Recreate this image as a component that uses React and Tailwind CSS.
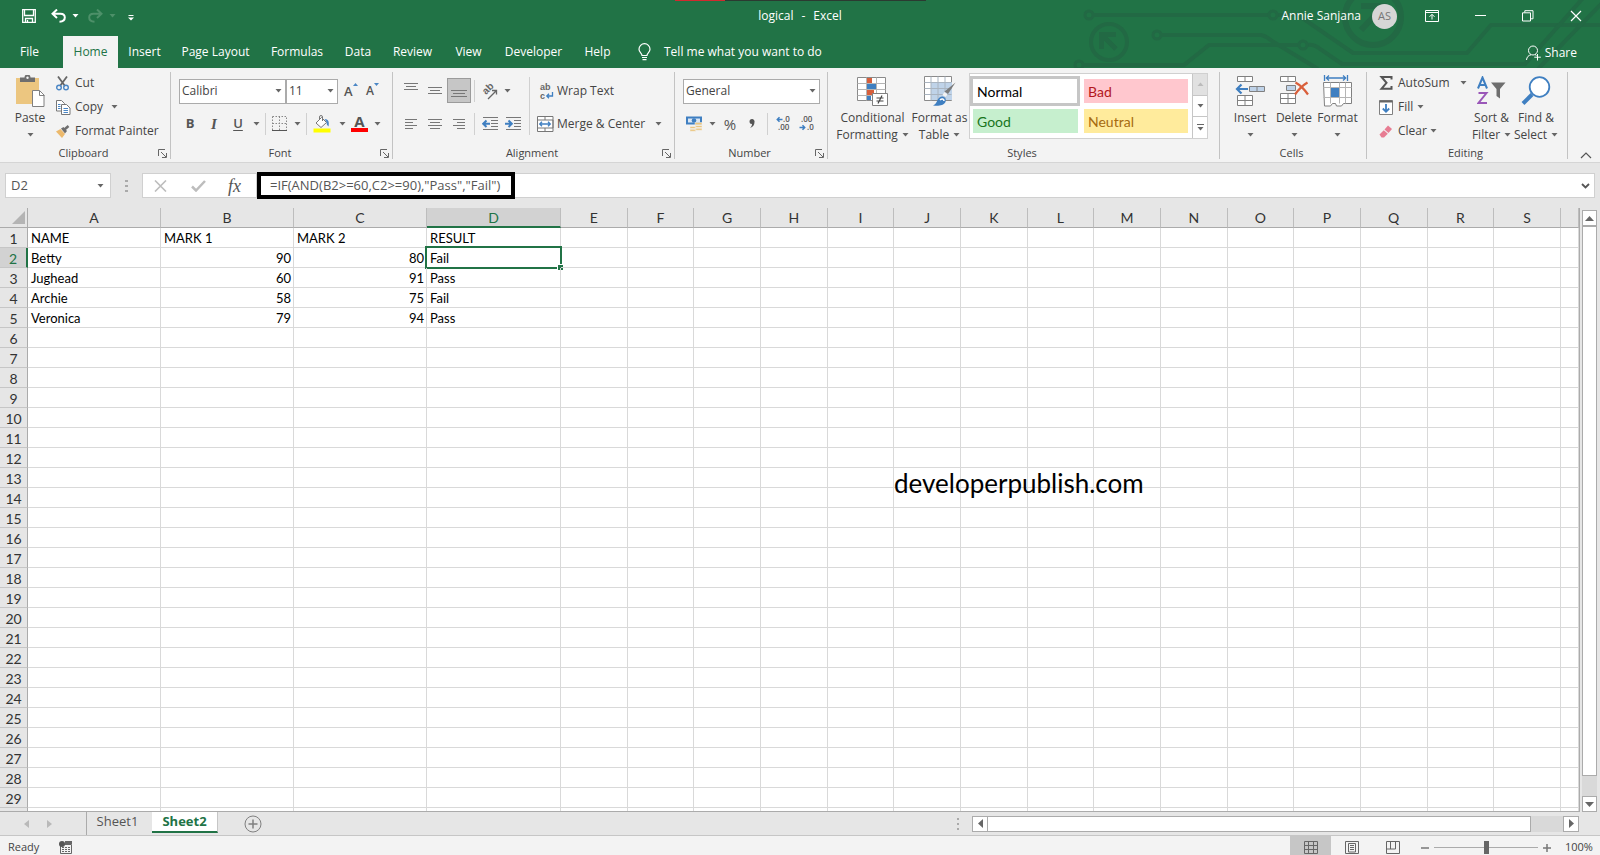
import { useState } from 'react'

const COLUMNS = ['A', 'B', 'C', 'D', 'E', 'F', 'G', 'H', 'I', 'J', 'K', 'L', 'M', 'N', 'O', 'P', 'Q', 'R', 'S', ''];

const SHEET = [
  ['NAME', 'MARK 1', 'MARK 2', 'RESULT'],
  ['Betty', 90, 80, 'Fail'],
  ['Jughead', 60, 91, 'Pass'],
  ['Archie', 58, 75, 'Fail'],
  ['Veronica', 79, 94, 'Pass'],
];

const TABS = [
  { name: 'File', width: 'w-[63px] pr-1' },
  { name: 'Home', width: 'w-[55px]' },
  { name: 'Insert', width: 'w-[53px]' },
  { name: 'Page Layout', width: 'w-[89px]' },
  { name: 'Formulas', width: 'w-[74px]' },
  { name: 'Data', width: 'w-[48px]' },
  { name: 'Review', width: 'w-[61px]' },
  { name: 'View', width: 'w-[51px]' },
  { name: 'Developer', width: 'w-[79px]' },
  { name: 'Help', width: 'w-[49px]' },
];

function Caret({ className = 'text-[#666]' }) {
  return (
    <svg className={`shrink-0 ${className}`} width="7" height="4" viewBox="0 0 7 4" fill="currentColor">
      <path d="M0.5 0h6L3.5 3.5z" />
    </svg>
  );
}

function ScrollArrow({ className = '' }) {
  return (
    <svg className={`shrink-0 ${className}`} width="9" height="5" viewBox="0 0 9 5" fill="#666">
      <path d="M0 0h9L4.500 5z" />
    </svg>
  );
}

function CaretButton({ label }) {
  return (
    <button aria-label={label} className="flex h-6 w-3.5 items-center justify-center">
      <Caret />
    </button>
  );
}

function Divider() {
  return <span className="h-[22px] w-px shrink-0 bg-[#d0d0d0]" />;
}

// rows of horizontal strokes, used by every alignment button
function Lines({ rows }) {
  return (
    <svg width="16" height="16" viewBox="0 0 16 16" stroke="#777" strokeWidth="1">
      {rows.map(([x, w, y]) => (
        <path key={y} d={`M${x} ${y}.5h${w}`} />
      ))}
    </svg>
  );
}

function Group({ name, width, launcher, children }) {
  return (
    <section aria-label={name} className={`relative flex shrink-0 flex-col ${width}`}>
      <div className="flex h-[78px]">{children}</div>
      <div className="flex h-[18px] items-center justify-center text-[11px] leading-4 text-[#444]">
        <span className="flex-1" />
        <span>{name}</span>
        <span className="flex flex-1 justify-end pr-1">
          {launcher && (
            <button aria-label={`${name} settings`}>
              <svg width="9" height="9" viewBox="0 0 9 9" fill="none" stroke="#666">
                <path d="M0.5 7V0.5H7M3 3l5 5M8.500 4v4.500H4" />
              </svg>
            </button>
          )}
        </span>
      </div>
      <span className="absolute right-0 top-1 h-[87px] w-px bg-[#c3c3c3]" />
    </section>
  );
}

function BigButton({ icon, lines, width }) {
  return (
    <button className={`flex flex-col items-center pt-[7px] text-[12px] leading-[17px] text-[#444] ${width}`}>
      <span className="mb-0.5 flex h-8 items-center justify-center">{icon}</span>
      <span className="whitespace-nowrap">{lines[0]}</span>
      <span className="flex h-[17px] items-center gap-1 whitespace-nowrap">
        {lines[1]}
        <Caret />
      </span>
    </button>
  );
}

function SmallButton({ icon, children }) {
  return (
    <button className="flex h-6 items-center whitespace-nowrap text-[12px] text-[#444]">
      <span className="flex w-[19px] items-center">{icon}</span>
      {children}
    </button>
  );
}

function Dropdown({ label, width, options }) {
  return (
    <div className={`relative ${width}`}>
      <select
        aria-label={label}
        className="h-[25px] w-full appearance-none border border-[#ababab] bg-white px-0.5 text-[12px] leading-4 text-[#444] outline-none"
      >
        {options.map((o) => (
          <option key={o}>{o}</option>
        ))}
      </select>
      <span className="pointer-events-none absolute inset-y-0 right-1 flex items-center">
        <Caret />
      </span>
    </div>
  );
}

function Circuit() {
  return (
    <svg className="absolute right-0 top-0" width="530" height="68" viewBox="1070 0 530 68" fill="none" stroke="#226944" strokeWidth="4">
      <circle cx="1089" cy="15" r="4" strokeWidth="3" />
      <path d="M1094 15H1268M1278 15H1298L1353 53H1467L1491 25H1600" />
      <circle cx="1273" cy="15" r="4" strokeWidth="3" />
      <circle cx="1109" cy="42" r="18" strokeWidth="4" />
      <path d="M1116 49L1103 36M1101.500 49V34.500H1116" strokeWidth="5" />
      <circle cx="1157" cy="35" r="4" strokeWidth="3" />
      <path d="M1162 35H1261Q1266 36 1272 41L1318 69" />
      <circle cx="1079" cy="65" r="4" strokeWidth="3" />
      <path d="M1084 65H1184L1209 45H1298M1308 45Q1314 44 1320 49L1342 64H1525L1583 -2M1538 69L1602 3" />
      <circle cx="1303" cy="45" r="4" strokeWidth="3" />
      <circle cx="1373" cy="17" r="28" strokeWidth="6" />
      <path d="M1361 6H1384V22M1361 30L1382 8" strokeWidth="6" />
    </svg>
  );
}

function TitleBar() {
  return (
    <header className="relative bg-[#217346] text-[12px] text-white">
      <Circuit />
      <div className="absolute inset-x-0 top-0 flex h-px justify-center">
        <span className="w-[50px] bg-[#d12a2f]" />
        <span className="w-[201px] bg-[#2b3a31]" />
      </div>
      <div className="relative flex h-9 items-center px-[18px] pb-1">
        <div className="flex flex-1 items-center">
          <button aria-label="Save" className="ml-1">
            <svg width="14" height="14" viewBox="0 0 14 14" fill="none" stroke="#fff" strokeWidth="1.300">
              <path d="M0.700 0.700H13.300V13.300H0.700z" />
              <path d="M2.500 1v5.500h9V1" />
              <path d="M3.500 13V9.500h7V13M5.500 13v-2" />
            </svg>
          </button>
          <button aria-label="Undo" className="ml-[15px]">
            <svg width="15" height="14" viewBox="0 0 15 14" fill="none" stroke="#fff" strokeWidth="2">
              <path d="M6 0.500L1.500 4.800L6 9M2 4.800H9.500C12.500 4.800 13.800 6.500 13.800 8.500C13.800 11 12 12.500 8.500 12.700" />
            </svg>
          </button>
          <span className="ml-1.5"><Caret className="text-white" /></span>
          <button aria-label="Redo" className="ml-[9px]">
            <svg width="15" height="14" viewBox="0 0 15 14" fill="none" stroke="#4d9069" strokeWidth="2">
              <path d="M9 0.500L13.500 4.800L9 9M13 4.800H5.500C2.500 4.800 1.200 6.500 1.200 8.500C1.200 11 3 12.500 6.500 12.700" />
            </svg>
          </button>
          <span className="ml-1.5"><Caret className="text-[#4d9069]" /></span>
          <button aria-label="Customize" className="ml-3 pt-1">
            <svg width="6" height="6" viewBox="0 0 6 6" fill="#fff"><path d="M0.500 0h5v1h-5zM0 2.500h6L3 5.500z" /></svg>
          </button>
        </div>
        <h1 className="flex gap-2"><span>logical</span><span>-</span><span>Excel</span></h1>
        <div className="flex flex-1 items-center justify-end">
          <span>Annie Sanjana</span>
          <span className="ml-[11px] flex size-[25px] items-center justify-center rounded-full bg-[#d6d6d6] text-[11px] text-[#777]">AS</span>
          <button aria-label="Ribbon display options" className="ml-[28px]">
            <svg width="14" height="12" viewBox="0 0 14 12" fill="none" stroke="#fff">
              <path d="M0.500 0.500H13.500V11.500H0.500zM0.500 2.500H13.500M7 9.500V4.500M4.500 6.800L7 4.300L9.500 6.800" />
            </svg>
          </button>
          <button aria-label="Minimize" className="ml-9">
            <svg width="11" height="2" viewBox="0 0 11 2" fill="#fff"><path d="M0 0h11v1H0z" /></svg>
          </button>
          <button aria-label="Restore" className="ml-9">
            <svg width="12" height="12" viewBox="0 0 12 12" fill="none" stroke="#fff">
              <path d="M0.500 2.800H8.500V11H0.500zM2.800 2.500V0.700H11V8.800H8.800" />
            </svg>
          </button>
          <button aria-label="Close" className="ml-9">
            <svg width="12" height="12" viewBox="0 0 12 12" stroke="#fff" strokeWidth="1.200"><path d="M1 1l10 10M11 1L1 11" /></svg>
          </button>
        </div>
      </div>
      <nav className="relative flex h-8">
        {TABS.map((tab) => (
          <button
            key={tab.name}
            className={`shrink-0 whitespace-nowrap text-center ${tab.width} ${tab.name === 'Home' ? 'bg-[#f3f3f3] text-[#217346]' : ''}`}
          >
            {tab.name}
          </button>
        ))}
        <button className="ml-4 flex items-center gap-[13px] whitespace-nowrap">
          <svg width="13" height="18" viewBox="0 0 13 18" fill="none" stroke="#fff" strokeWidth="1.200">
            <path d="M4 12.500C4 10 1 9.500 1 6.200A5.500 5.500 0 0 1 12 6.200C12 9.500 9 10 9 12.500zM4 14.500h5M4.500 16.700h4" />
          </svg>
          Tell me what you want to do
        </button>
        <button className="ml-auto mr-[23px] flex items-center gap-1 pt-0.5">
          <svg width="15" height="16" viewBox="0 0 15 16" fill="none" stroke="#fff">
            <circle cx="7" cy="5.500" r="4.500" />
            <path d="M0.500 15C0.800 12 2.500 10.200 5 9.800M11.500 9v6.500M8.300 12.200h6.500M9 9.500l1.500 1" />
          </svg>
          Share
        </button>
      </nav>
    </header>
  );
}

function ClipboardGroup() {
  return (
    <Group name="Clipboard" width="w-[171px]" launcher>
      <BigButton
        width="w-14 pl-1"
        lines={['Paste', '']}
        icon={
          <svg width="30" height="32" viewBox="0 0 30 32">
            <path d="M1 3h23v26H1z" fill="#ecc680" />
            <path d="M5 2.500h4.500a3 3 0 0 1 6 0H20V7H5z" fill="#6e6e6e" />
            <circle cx="12.500" cy="2.800" r="1.200" fill="#f3f3f3" />
            <path d="M17.500 15.500h7l4.500 4.500v11.500H17.500z" fill="#fff" stroke="#808080" />
            <path d="M24.500 15.500v5h5" fill="none" stroke="#808080" />
          </svg>
        }
      />
      <div className="flex flex-col items-start pt-[3px]">
        <SmallButton
          icon={
            <svg width="13" height="15" viewBox="0 0 13 15" fill="none">
              <path d="M2 0.500L9 10M11 0.500L4 10" stroke="#666" strokeWidth="1.800" />
              <circle cx="3" cy="11.500" r="2.300" stroke="#4a86c5" strokeWidth="1.400" />
              <circle cx="10" cy="11.500" r="2.300" stroke="#4a86c5" strokeWidth="1.400" />
            </svg>
          }
        >
          Cut
        </SmallButton>
        <div className="flex items-center gap-1">
          <SmallButton
            icon={
              <svg width="15" height="15" viewBox="0 0 15 15" stroke="#777">
                <path d="M0.500 0.500h5l3 3v7.500h-8z" fill="#fff" />
                <path d="M5.500 4.500h5l3.500 3.500v6.500h-8.500z" fill="#fff" />
                <path d="M2 4.500h2.500M2 6.500h2.500M2 8.500h2.500M7.500 8.500h4.500M7.500 10.500h4.500M7.500 12.500h4.500" stroke="#4a86c5" />
              </svg>
            }
          >
            Copy
          </SmallButton>
          <CaretButton label="Copy options" />
        </div>
        <SmallButton
          icon={
            <svg width="14" height="13" viewBox="0 0 14 13">
              <path d="M0 6.500L4.500 4L9 9L6 13z" fill="#ecb96c" />
              <path d="M5 3.500L7.500 2L11 6L9 8.500z" fill="#6e6e6e" />
              <path d="M8.500 4.500L12.500 1" stroke="#6e6e6e" strokeWidth="2.500" />
            </svg>
          }
        >
          Format Painter
        </SmallButton>
      </div>
    </Group>
  );
}

function FontGroup() {
  return (
    <Group name="Font" width="w-[222px]" launcher>
      <div className="flex flex-col gap-1.5 pl-2 pt-[9px] text-[#555]">
        <div className="flex h-[27px] items-center">
          <Dropdown label="Font" width="w-[107px]" options={['Calibri', 'Arial', 'Cambria']} />
          <Dropdown label="Font size" width="w-[52px]" options={['11', '12', '14']} />
          <button aria-label="Increase font size" className="ml-1.5 flex w-[18px] text-[13px] font-semibold leading-4">
            A
            <svg width="5" height="4" viewBox="0 0 5 4" fill="#4a86c5"><path d="M0 3h5L2.500 0z" /></svg>
          </button>
          <button aria-label="Decrease font size" className="ml-1 flex w-[18px] text-[12px] font-semibold leading-4">
            A
            <svg width="5" height="4" viewBox="0 0 5 4" fill="#4a86c5"><path d="M0 0h5L2.500 3z" /></svg>
          </button>
        </div>
        <div className="flex h-[27px] items-center text-[13px]">
          <button className="w-[22px] font-bold">B</button>
          <button className="w-[26px] font-['Liberation_Serif',serif] text-[15px] font-bold italic leading-5">I</button>
          <button className="w-[22px] font-semibold underline underline-offset-2">U</button>
          <CaretButton label="Underline options" />
          <span className="mx-0.5 flex"><Divider /></span>
          <button aria-label="Borders" className="flex w-[22px] justify-center">
            <svg width="15" height="15" viewBox="0 0 15 15" fill="none" stroke="#888">
              <path d="M0.500 0.500h14v14M0.500 0.500v14M7.500 0.500v14M0.500 7.500h14" strokeDasharray="1.500 1.500" />
              <path d="M0 14.500h15" stroke="#555" />
            </svg>
          </button>
          <CaretButton label="Border options" />
          <span className="mx-0.5 flex"><Divider /></span>
          <button aria-label="Fill color" className="flex w-[26px] justify-center">
            <svg width="18" height="18" viewBox="0 0 18 18" fill="none">
              <path d="M3 8L8.500 2.500L13.500 7.500L8 12.500z" fill="#fff" stroke="#777" />
              <path d="M6.500 5V2a1.500 1.500 0 0 1 3 0v4" stroke="#777" />
              <path d="M11.500 4C15.500 4 16.500 7 15.500 11.500C13.500 10 13.500 8 13.800 7.500z" fill="#4a86c5" />
              <path d="M0.500 13.500h17v4h-17z" fill="#ff0" />
            </svg>
          </button>
          <CaretButton label="Fill color options" />
          <button aria-label="Font color" className="flex w-[21px] flex-col items-center">
            <span className="text-[15px] font-bold leading-[13px]">A</span>
            <span className="h-1 w-[17px] bg-[#f00]" />
          </button>
          <CaretButton label="Font color options" />
        </div>
      </div>
    </Group>
  );
}

function AlignmentGroup() {
  return (
    <Group name="Alignment" width="w-[282px]" launcher>
      <div className="flex w-[136px] flex-col gap-1.5 pl-1.5 pt-[9px]">
        <div className="flex h-[27px] items-center">
          <button aria-label="Top align" className="flex w-6 justify-center"><Lines rows={[[1, 14, 0], [3, 10, 3], [1, 14, 6]]} /></button>
          <button aria-label="Middle align" className="flex w-6 justify-center"><Lines rows={[[1, 14, 4], [3, 10, 7], [1, 14, 10]]} /></button>
          <button aria-label="Bottom align" className="flex h-[25px] w-6 items-center justify-center border border-[#9b9b9b] bg-[#c6c6c6]">
            <Lines rows={[[0, 16, 7], [2, 12, 10], [0, 16, 13]]} />
          </button>
          <span className="mx-[3px] flex"><Divider /></span>
          <button aria-label="Orientation" className="flex w-[22px] justify-center">
            <svg className="overflow-visible font-['Liberation_Sans',sans-serif]" width="17" height="16" viewBox="0 0 17 16">
              <text x="0" y="0" transform="translate(5 12) rotate(-45)" fontSize="10" fontWeight="600" fill="#666">ab</text>
              <path d="M7 16L15 8M11 7.500h4.500v4" fill="none" stroke="#666" strokeWidth="1.300" />
            </svg>
          </button>
          <CaretButton label="Orientation options" />
        </div>
        <div className="flex h-[27px] items-center">
          <button aria-label="Align left" className="flex w-6 justify-center"><Lines rows={[[2, 12, 3], [2, 8, 6], [2, 12, 9], [2, 8, 12]]} /></button>
          <button aria-label="Center" className="flex w-6 justify-center"><Lines rows={[[1, 14, 3], [3, 10, 6], [1, 14, 9], [3, 10, 12]]} /></button>
          <button aria-label="Align right" className="flex w-6 justify-center"><Lines rows={[[2, 12, 3], [6, 8, 6], [2, 12, 9], [6, 8, 12]]} /></button>
          <span className="mx-[3px] flex"><Divider /></span>
          <button aria-label="Decrease indent" className="flex w-[23px] justify-center">
            <svg width="16" height="14" viewBox="0 0 16 14" fill="none" stroke="#777">
              <path d="M1 0.500h15M9 3.500h7M9 6.500h7M9 9.500h7M1 12.500h15" />
              <path d="M8 6.800H1.500M4.500 3.500L1.200 6.800L4.500 10" stroke="#3f7fc1" strokeWidth="2" />
            </svg>
          </button>
          <button aria-label="Increase indent" className="flex w-[23px] justify-center">
            <svg width="16" height="14" viewBox="0 0 16 14" fill="none" stroke="#777">
              <path d="M1 0.500h15M9 3.500h7M9 6.500h7M9 9.500h7M1 12.500h15" />
              <path d="M0 6.800H6.500M3.500 3.500L6.800 6.800L3.500 10" stroke="#3f7fc1" strokeWidth="2" />
            </svg>
          </button>
        </div>
      </div>
      <span className="mt-[9px] h-[58px] w-px bg-[#d0d0d0]" />
      <div className="flex flex-col gap-1.5 pl-[7px] pt-[9px] text-[12px] text-[#444]">
        <button className="flex h-[27px] items-center">
          <svg className="ml-0.5 mr-[3px] overflow-visible font-['Liberation_Sans',sans-serif]" width="15" height="18" viewBox="0 0 15 18">
            <text x="1" y="8" fontSize="9" fontWeight="600" fill="#666">ab</text>
            <text x="1" y="17" fontSize="9" fontWeight="600" fill="#666">c</text>
            <path d="M13.500 10v4H8M10 11.800L7.800 14L10 16.200" fill="none" stroke="#3f7fc1" strokeWidth="1.300" />
          </svg>
          Wrap Text
        </button>
        <div className="flex h-[27px] items-center">
          <button className="flex items-center whitespace-nowrap">
            <svg className="mr-[3px]" width="17" height="16" viewBox="0 0 17 16" fill="#fff" stroke="#777">
              <path d="M0.500 0.500h15.500v15h-15.500zM8 0.500v3.500M8 12v3.500M0.500 4h15.500v8h-15.500z" />
              <path d="M2.500 8h11M5 5.800L2.700 8L5 10.200M11 5.800L13.300 8L11 10.200" fill="none" stroke="#3f7fc1" strokeWidth="1.300" />
            </svg>
            Merge &amp; Center
          </button>
          <span className="ml-1.5 flex"><CaretButton label="Merge options" /></span>
        </div>
      </div>
    </Group>
  );
}

function NumberGroup() {
  return (
    <Group name="Number" width="w-[153px]" launcher>
      <div className="flex flex-col gap-1.5 pl-2 pt-[9px] text-[#555]">
        <div className="flex h-[27px] items-center">
          <Dropdown label="Number format" width="w-[137px]" options={['General', 'Number', 'Currency']} />
        </div>
        <div className="flex h-[27px] items-center">
          <button aria-label="Accounting format" className="flex w-[22px] justify-center">
            <svg width="17" height="16" viewBox="0 0 17 16">
              <path d="M0 0.500h16v8H0z" fill="#3f7fc1" />
              <path d="M2 2.500h12v4H2z" fill="#dbe7f4" />
              <circle cx="8" cy="4.500" r="2.300" fill="#3f7fc1" />
              <path d="M9 6.500h7v2.300H9zM9 9.500h7v2H9zM9 12.300h7v2H9zM4 10.500h6v2H4zM4 13.300h6v2H4z" fill="#ecc680" stroke="#f3f3f3" strokeWidth="0.500" />
            </svg>
          </button>
          <CaretButton label="Accounting options" />
          <button aria-label="Percent style" className="w-[22px] text-[15px] leading-5">%</button>
          <button aria-label="Comma style" className="flex w-[22px] justify-center">
            <svg width="6" height="9" viewBox="0 0 6 9" fill="#555"><path d="M3 0a2.500 2.500 0 0 1 2.500 3C5.500 6 4 8 1 9C2.500 7.500 3 6.500 3 5A2.500 2.500 0 0 1 3 0z" /></svg>
          </button>
          <span className="mx-1 flex"><Divider /></span>
          <button aria-label="Increase decimal" className="flex w-[23px] justify-center">
            <svg className="overflow-visible" width="15" height="15" viewBox="0 0 15 15" fontSize="8" fontWeight="600" fill="#555">
              <text x="7" y="6">.0</text>
              <text x="2" y="14">.00</text>
              <path d="M6.500 3.500H1.500M3.500 1.300L1.300 3.500L3.500 5.700" fill="none" stroke="#3f7fc1" strokeWidth="1.500" />
            </svg>
          </button>
          <button aria-label="Decrease decimal" className="flex w-[23px] justify-center">
            <svg className="overflow-visible" width="15" height="15" viewBox="0 0 15 15" fontSize="8" fontWeight="600" fill="#555">
              <text x="2" y="6">.00</text>
              <text x="8" y="14">.0</text>
              <path d="M0.500 11.500H5.500M3.500 9.300L5.700 11.500L3.500 13.700" fill="none" stroke="#3f7fc1" strokeWidth="1.500" />
            </svg>
          </button>
        </div>
      </div>
    </Group>
  );
}

function StylesGroup() {
  return (
    <Group name="Styles" width="w-[392px]">
      <div className="flex pl-[7px]">
        <BigButton
          width="w-[75px]"
          lines={['Conditional', 'Formatting']}
          icon={
            <svg width="32" height="30" viewBox="0 0 32 30">
              <path d="M0.500 1.500h28v23h-28z" fill="#fff" stroke="#8a8a8a" />
              <path d="M9.500 1.500v23M19.500 1.500v23M0.500 7.500h28M0.500 13.500h28M0.500 19.500h28" stroke="#b5b5b5" />
              <path d="M10 2h5v5h-5zM10 14h7v5h-7z" fill="#d65f3c" />
              <path d="M10 8h9v5h-9zM10 20h4v4h-4z" fill="#3f7fc1" />
              <path d="M15.500 17.500h15v12h-15z" fill="#fff" stroke="#808080" />
              <path d="M19.500 22h7M19.500 25h7M25 19.500l-4 8" stroke="#444" strokeWidth="1.200" />
            </svg>
          }
        />
        <BigButton
          width="w-[59px]"
          lines={['Format as', 'Table']}
          icon={
            <svg width="32" height="30" viewBox="0 0 32 30">
              <path d="M0.500 0.500h27v24h-27z" fill="#fff" stroke="#8a8a8a" />
              <path d="M7 6h21v18H7z" fill="#bfd3e9" />
              <path d="M7 0.500v24M14 0.500v24M21 0.500v24M0.500 6.500h27M0.500 12.500h27M0.500 18.500h27" stroke="#a9b4c0" />
              <path d="M31.500 6.500L24 18L20.500 15.500z" fill="#7b7b7b" />
              <path d="M20.500 16L23.500 18.500L21.500 21L18.500 19z" fill="#f3f3f3" />
              <path d="M9 29.500C13 28 12.500 24 15.500 21.500C19 19 23 22 21.500 26C19.500 30 14 30 9 29.500z" fill="#3f7fc1" />
              <path d="M16 24c2-2 4-1 4 1" fill="none" stroke="#fff" strokeWidth="1.500" />
            </svg>
          }
        />
      </div>
      <div className="mt-[5px] flex h-[66px] w-[239px] border border-[#d0d0d0] bg-white font-['Lato',sans-serif] text-[14px]">
        <div className="grid flex-1 grid-cols-[110px_1fr] content-start items-start gap-x-1 gap-y-0.5 pr-1 pt-0.5">
          <button className="h-[30px] border-[3px] border-[#c6c6c6] pl-1 text-left text-black">Normal</button>
          <button className="mt-[3px] h-6 bg-[#ffc7ce] pl-1 text-left text-[#b3161d]">Bad</button>
          <button className="ml-[3px] mr-0.5 mt-px h-6 bg-[#c6efce] pl-1 text-left text-[#18751c]">Good</button>
          <button className="mt-px h-6 bg-[#ffeb9c] pl-1 text-left text-[#a66a10]">Neutral</button>
        </div>
        <div className="flex w-[15px] flex-col divide-y divide-[#c6c6c6] border-l border-[#c6c6c6]">
          <button aria-label="Previous styles" className="flex flex-1 items-center justify-center bg-[#e1e1e1]">
            <Caret className="rotate-180 text-[#bbb]" />
          </button>
          <button aria-label="Next styles" className="flex flex-1 items-center justify-center"><Caret /></button>
          <button aria-label="All styles" className="flex flex-1 flex-col items-center justify-center gap-0.5">
            <span className="h-px w-[7px] bg-[#666]" />
            <Caret />
          </button>
        </div>
      </div>
    </Group>
  );
}

function CellsGroup() {
  return (
    <Group name="Cells" width="w-[147px]">
      <div className="flex pl-2">
        <BigButton
          width="w-11"
          lines={['Insert', '']}
          icon={
            <svg width="30" height="30" viewBox="0 0 30 30" fill="#fff" stroke="#808080">
              <path d="M2.500 0.500h15v5h-15zM10 0.500v5M2.500 19.500h15v10h-15zM10 19.500v10M2.500 24.500h15" />
              <path d="M14.500 10.500h15v5h-15zM22 10.500v5" fill="#bfd3e9" />
              <path d="M13 13H2M6.500 8.500L2 13L6.500 17.500" fill="none" stroke="#3f7fc1" strokeWidth="2.200" />
            </svg>
          }
        />
        <BigButton
          width="w-11"
          lines={['Delete', '']}
          icon={
            <svg width="30" height="30" viewBox="0 0 30 30" fill="#fff" stroke="#808080">
              <path d="M1.500 0.500h15v5h-15zM9 0.500v5M1.500 17.500h15v10h-15zM9 17.500v10M1.500 22.500h15" />
              <path d="M7.500 9.500h9v5h-9z" fill="#bfd3e9" />
              <path d="M16.500 6.500C21 9 25.500 13.500 29 18.500M28.500 6.500C23.500 9.500 19.500 13.500 16 18.500" fill="none" stroke="#d95f3b" strokeWidth="2.200" />
            </svg>
          }
        />
        <BigButton
          width="w-[43px]"
          lines={['Format', '']}
          icon={
            <svg width="30" height="32" viewBox="0 0 30 32" fill="none">
              <path d="M1.500 0v6M24.500 0v6M3 3h20M6 0.500L3.300 3L6 5.500M20 0.500L22.700 3L20 5.500" stroke="#3f7fc1" strokeWidth="1.300" />
              <path d="M0.500 7.500h28v21h-8l-2 2.500h-5l-1-2.500h-3l-2 2.500H1.500z" fill="#fff" stroke="#808080" />
              <path d="M7.500 7.500v21M16.500 7.500v21M22.500 7.500v21M0.500 12.500h28M0.500 22.500h28" stroke="#b5b5b5" />
              <path d="M8 13h8v9H8z" fill="#3f7fc1" />
            </svg>
          }
        />
      </div>
    </Group>
  );
}

function EditingGroup() {
  return (
    <Group name="Editing" width="w-[201px]">
      <div className="flex w-[103px] flex-col items-start pl-3 pt-[3px]">
        <div className="flex w-full items-center justify-between">
          <SmallButton
            icon={
              <svg width="14" height="14" viewBox="0 0 14 14" fill="none" stroke="#555" strokeWidth="2">
                <path d="M12.500 3.500V1H2.500L7.500 6.800L2.500 12.800H12.500V10" />
              </svg>
            }
          >
            AutoSum
          </SmallButton>
          <CaretButton label="AutoSum options" />
        </div>
        <SmallButton
          icon={
            <svg width="14" height="15" viewBox="0 0 14 15" fill="#fff" stroke="#808080">
              <path d="M0.500 0.500h13v14h-13z" />
              <path d="M0.500 1.500h13" stroke="#666" strokeWidth="2" />
              <path d="M7 4v8M3.800 8.500L7 11.800L10.200 8.500" fill="none" stroke="#3f7fc1" strokeWidth="1.800" />
            </svg>
          }
        >
          <span className="flex items-center gap-1">Fill <Caret /></span>
        </SmallButton>
        <SmallButton
          icon={
            <svg width="14" height="13" viewBox="0 0 14 13">
              <path d="M9 0.500L13 4L9.500 8L5.500 4.500z" fill="#e77c92" />
              <path d="M4.800 5.200L8.800 8.700L5 12.500H2.500L0.500 9.500z" fill="#e77c92" />
            </svg>
          }
        >
          <span className="flex items-center gap-[3px]">Clear <Caret /></span>
        </SmallButton>
      </div>
      <BigButton
        width="w-[43px]"
        lines={['Sort &', 'Filter']}
        icon={
          <svg width="29" height="30" viewBox="0 0 29 30" fill="none">
            <path d="M1 12.500L5.500 1.500L10 12.500M2.500 9h6" stroke="#3f7fc1" strokeWidth="2" />
            <path d="M1.500 17h8L1.500 27h8.500" stroke="#9a57b8" strokeWidth="2" />
            <path d="M14 6.500h14.500L23 13v9.500l-3.500-2.500v-7z" fill="#6e6e6e" />
          </svg>
        }
      />
      <BigButton
        width="w-[46px]"
        lines={['Find &', 'Select']}
        icon={
          <svg width="30" height="30" viewBox="0 0 30 30" fill="none" stroke="#3f7fc1">
            <circle cx="18.500" cy="11" r="9.800" fill="#fff" strokeWidth="1.800" />
            <path d="M11 18.500L2 27.500" strokeWidth="4" />
          </svg>
        }
      />
    </Group>
  );
}

function Ribbon() {
  return (
    <div className="flex h-[95px] shrink-0 border-b border-[#d5d5d5] bg-[#f3f3f3]">
      <ClipboardGroup />
      <FontGroup />
      <AlignmentGroup />
      <NumberGroup />
      <StylesGroup />
      <CellsGroup />
      <EditingGroup />
      <button aria-label="Collapse ribbon" className="ml-auto mr-2 self-end pb-[3px]">
        <svg width="12" height="7" viewBox="0 0 12 7" fill="none" stroke="#555" strokeWidth="1.200"><path d="M1 6l5-5l5 5" /></svg>
      </button>
    </div>
  );
}

function FormulaBar() {
  const [formula, setFormula] = useState('=IF(AND(B2>=60,C2>=90),"Pass","Fail")');

  return (
    <div className="flex h-[45px] shrink-0 items-center bg-[#e6e6e6] px-[5px] text-[13px] text-[#555]">
      <div className="flex h-[25px] w-[106px] items-center border border-[#d0d0d0] bg-white pr-1.5">
        <input aria-label="Name box" defaultValue="D2" className="w-full min-w-0 pl-[5px] outline-none" />
        <Caret />
      </div>
      <svg className="mx-3.5" width="3" height="12" viewBox="0 0 3 12" fill="#aaa"><path d="M0 0h3v2H0zM0 5h3v2H0zM0 10h3v2H0z" /></svg>
      <div className="flex h-[25px] w-[115px] shrink-0 items-center border border-[#d0d0d0] bg-white pl-[11px]">
        <button aria-label="Cancel">
          <svg width="13" height="12" viewBox="0 0 13 12" stroke="#bdbdbd" strokeWidth="1.600"><path d="M1 0.500L12 11.500M12 0.500L1 11.500" /></svg>
        </button>
        <button aria-label="Enter" className="ml-6">
          <svg width="15" height="12" viewBox="0 0 15 12" fill="none" stroke="#bdbdbd" strokeWidth="2.500"><path d="M1 6.500L5 10.500L14 1" /></svg>
        </button>
        <button aria-label="Insert function" className="ml-[22px] font-['Liberation_Serif',serif] text-[18px] italic leading-5">fx</button>
      </div>
      <div className="flex h-[27px] w-[258px] shrink-0 border-4 border-black bg-white">
        <input
          aria-label="Formula"
          value={formula}
          onChange={(e) => setFormula(e.target.value)}
          className="w-full min-w-0 pl-[9px] outline-none"
        />
      </div>
      <div className="flex h-[25px] flex-1 items-center justify-end border border-l-0 border-[#d0d0d0] bg-white pr-1">
        <button aria-label="Expand formula bar">
          <svg width="9" height="6" viewBox="0 0 9 6" fill="none" stroke="#555" strokeWidth="1.800"><path d="M1 1l3.500 3.500L8 1" /></svg>
        </button>
      </div>
    </div>
  );
}

function Grid() {
  return (
    <div className="relative min-w-0 flex-1 overflow-hidden border-b border-[#ababab] bg-white">
      <table className="w-full table-fixed border-separate border-spacing-0 font-['Lato',sans-serif] text-[13px] leading-[17px] text-black">
        <colgroup>
          <col className="w-7" />
          <col className="w-[133px]" />
          <col className="w-[133px]" />
          <col className="w-[133px]" />
          <col className="w-[134px]" />
          {COLUMNS.slice(4, 19).map((c) => (
            <col key={c} />
          ))}
          <col className="w-[18px]" />
        </colgroup>
        <thead>
          <tr className="h-5 bg-[#e6e6e6] text-[14px] text-[#333]">
            <th aria-label="Select all" className="border-b border-r border-[#ababab] p-0">
              <svg className="ml-3" width="13" height="13" viewBox="0 0 13 13" fill="#b4b4b4"><path d="M13 0v13H0z" /></svg>
            </th>
            {COLUMNS.map((c) => (
              <th
                key={c}
                className={`border-r border-[#bdbdbd] p-0 font-normal ${c === 'D' ? 'border-b-2 border-b-[#217346] bg-[#d2d2d2] text-[#217346]' : 'border-b border-b-[#ababab]'}`}
              >
                {c}
              </th>
            ))}
          </tr>
        </thead>
        <tbody>
          {[...Array(30)].map((_, r) => (
            <tr key={r} className="h-5">
              <th
                className={`border-b border-b-[#c6c6c6] px-0 pb-0 pt-0.5 text-[14px] font-normal ${r === 1 ? 'border-r-2 border-r-[#217346] bg-[#d2d2d2] text-[#217346]' : 'border-r border-r-[#ababab] bg-[#e6e6e6] text-[#333]'}`}
              >
                {r + 1}
              </th>
              {COLUMNS.map((c, i) => {
                const value = SHEET[r]?.[i];
                return (
                  <td
                    key={c}
                    className={`relative border-b border-r border-[#d9d9d9] pb-0 pl-[3px] pr-0.5 pt-0.5 ${typeof value === 'number' ? 'text-right' : ''}`}
                  >
                    {value}
                    {c === 'D' && r === 1 && (
                      <span className="absolute -bottom-0.5 -left-0.5 -right-0.5 -top-0.5 border-2 border-[#217346]">
                        <span className="absolute -bottom-[3px] -right-[3px] size-[6px] border-l border-t border-white bg-[#217346]" />
                      </span>
                    )}
                  </td>
                );
              })}
            </tr>
          ))}
        </tbody>
      </table>
      <p className="absolute left-[894px] top-[259px] font-['Lato',sans-serif] text-[26px] leading-8 text-black">developerpublish.com</p>
    </div>
  );
}

function VerticalScroll() {
  return (
    <div className="flex w-[21px] shrink-0 flex-col border-l border-[#ababab] bg-[#e6e6e6] pl-0.5 pr-[3px] pt-0.5">
      <button aria-label="Scroll up" className="flex h-4 items-center justify-center border border-[#ababab] bg-white">
        <ScrollArrow className="rotate-180" />
      </button>
      <div className="flex flex-1 flex-col bg-[#d9d9d9] pb-5">
        <div className="flex-1 border border-[#ababab] bg-white" />
      </div>
      <button aria-label="Scroll down" className="flex h-4 items-center justify-center border border-[#ababab] bg-white">
        <ScrollArrow />
      </button>
    </div>
  );
}

function SheetTabs() {
  return (
    <div className="flex h-6 shrink-0 border-b border-[#c6c6c6] bg-[#e6e6e6] text-[13px] text-[#555]">
      <div className="flex w-[87px] items-center gap-[18px] border-r border-[#ababab] pl-6">
        <button aria-label="Previous sheet"><svg width="5" height="8" viewBox="0 0 5 8" fill="#b9b9b9"><path d="M5 0v8L0 4z" /></svg></button>
        <button aria-label="Next sheet"><svg width="5" height="8" viewBox="0 0 5 8" fill="#b9b9b9"><path d="M0 0v8l5-4z" /></svg></button>
      </div>
      <button className="h-[18px] w-[65px] pr-1 text-center leading-4">Sheet1</button>
      <button className="h-[21px] w-[66px] border-b-2 border-r border-b-[#217346] border-r-[#c6c6c6] bg-white pb-0.5 text-center font-bold leading-4 text-[#217346]">Sheet2</button>
      <button aria-label="New sheet" className="ml-[26px]">
        <svg width="18" height="18" viewBox="0 0 18 18" fill="none" stroke="#808080"><circle cx="9" cy="9" r="8" /><path d="M4.500 9h9M9 4.500v9" strokeWidth="1.500" /></svg>
      </button>
      <div className="ml-auto flex w-[42%] items-center pr-[21px]">
        <svg className="ml-[29px] mr-[13px]" width="2" height="12" viewBox="0 0 2 12" fill="#aaa"><path d="M0 0h2v2H0zM0 5h2v2H0zM0 10h2v2H0z" /></svg>
        <div className="flex h-4 flex-1 bg-[#d9d9d9]">
          <button aria-label="Scroll left" className="flex w-4 items-center justify-center border border-[#ababab] bg-white"><ScrollArrow className="rotate-90" /></button>
          <div className="-ml-px flex-1 border border-[#ababab] bg-white" />
          <button aria-label="Scroll right" className="ml-8 flex w-4 items-center justify-center border border-[#ababab] bg-white"><ScrollArrow className="-rotate-90" /></button>
        </div>
      </div>
    </div>
  );
}

function StatusBar() {
  return (
    <footer className="flex h-[19px] shrink-0 items-center bg-[#f3f3f3] pl-2 pr-2 text-[11px] text-[#444]">
      <span className="pt-1">Ready</span>
      <button aria-label="Record macro" className="ml-5 pt-1">
        <svg width="13" height="13" viewBox="0 0 13 13" fill="none" stroke="#666">
          <path d="M1.500 3.500h11v9h-11z" />
          <path d="M6 1.500h7" strokeWidth="3" />
          <path d="M3 6.500h8M3 8.500h8M3 10.500h8" strokeDasharray="2 1" />
          <circle cx="3" cy="3" r="3" fill="#555" stroke="none" />
        </svg>
      </button>
      <div className="ml-auto flex h-full items-center">
        <button aria-label="Normal view" className="flex h-full w-[41px] items-center justify-center bg-[#c6c6c6] pt-1">
          <svg width="14" height="13" viewBox="0 0 14 13" fill="none" stroke="#666"><path d="M0.500 0.500h13v12h-13zM4.500 0.500v12M9.500 0.500v12M0.500 4.500h13M0.500 8.500h13" /></svg>
        </button>
        <button aria-label="Page layout view" className="flex w-[41px] justify-center pt-1">
          <svg width="14" height="13" viewBox="0 0 14 13" fill="none" stroke="#666"><path d="M0.500 0.500h13v12h-13zM3.500 2.500h7v8.500h-7zM5 4.500h4M5 6.500h4M5 8.500h4" /></svg>
        </button>
        <button aria-label="Page break view" className="flex w-[41px] justify-center pt-1">
          <svg width="14" height="13" viewBox="0 0 14 13" fill="none" stroke="#666"><path d="M0.500 0.500h13v12h-13zM4.500 0.500v7.500M0.500 8h9V0.500" /></svg>
        </button>
        <button aria-label="Zoom out" className="ml-2 pt-1"><svg width="8" height="8" viewBox="0 0 8 8" stroke="#777" strokeWidth="1.500"><path d="M0 4h8" /></svg></button>
        <input
          type="range"
          aria-label="Zoom"
          defaultValue="50"
          className="ml-[5px] mt-1 h-px w-[104px] appearance-none bg-[#ababab] [&::-webkit-slider-thumb]:h-[13px] [&::-webkit-slider-thumb]:w-[5px] [&::-webkit-slider-thumb]:appearance-none [&::-webkit-slider-thumb]:bg-[#666]"
        />
        <button aria-label="Zoom in" className="ml-[5px] pt-1"><svg width="8" height="8" viewBox="0 0 8 8" stroke="#777" strokeWidth="1.500"><path d="M0 4h8M4 0v8" /></svg></button>
        <span className="ml-3.5 w-[27px] pt-1">100%</span>
      </div>
    </footer>
  );
}

function App() {
  return (
    <div className="flex h-screen flex-col overflow-hidden bg-[#e6e6e6] font-['Open_Sans',sans-serif]">
      <TitleBar />
      <Ribbon />
      <FormulaBar />
      <main className="flex min-h-0 flex-1">
        <Grid />
        <VerticalScroll />
      </main>
      <SheetTabs />
      <StatusBar />
    </div>
  )
}

export default App
